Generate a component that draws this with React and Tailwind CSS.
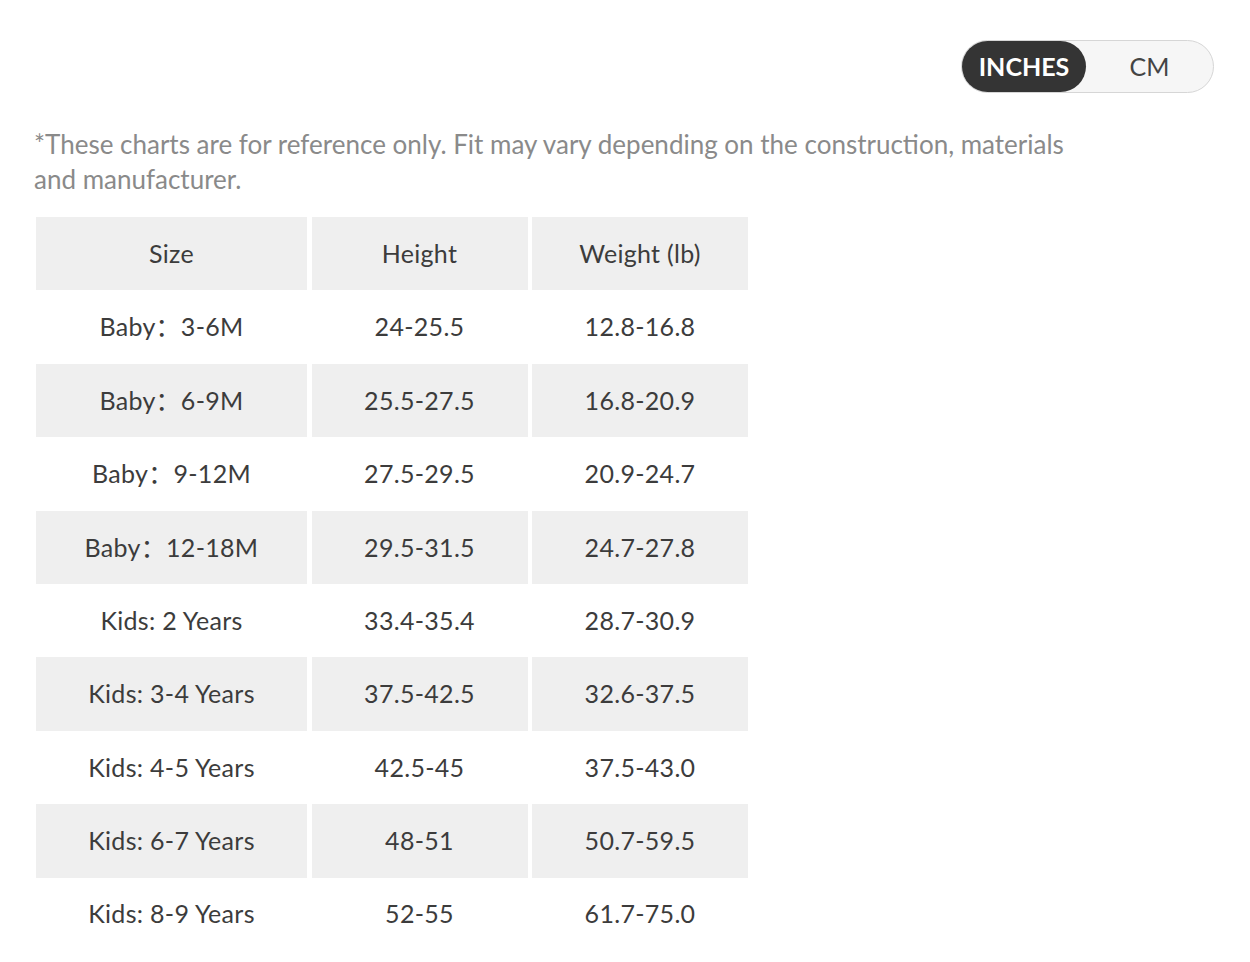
import React from "react";

const rows = [
  ["Baby：3-6M", "24-25.5", "12.8-16.8"],
  ["Baby：6-9M", "25.5-27.5", "16.8-20.9"],
  ["Baby：9-12M", "27.5-29.5", "20.9-24.7"],
  ["Baby：12-18M", "29.5-31.5", "24.7-27.8"],
  ["Kids: 2 Years", "33.4-35.4", "28.7-30.9"],
  ["Kids: 3-4 Years", "37.5-42.5", "32.6-37.5"],
  ["Kids: 4-5 Years", "42.5-45", "37.5-43.0"],
  ["Kids: 6-7 Years", "48-51", "50.7-59.5"],
  ["Kids: 8-9 Years", "52-55", "61.7-75.0"],
];

const Cell = ({ children, shaded }) => (
  <div
    className={`flex h-[73.4px] items-center justify-center text-[25px] tracking-[0.3px] text-[#3c3c3c] ${
      shaded ? "bg-[#efefef]" : "bg-white"
    }`}
  >
    {children}
  </div>
);

const App = () => {
  const [unit, setUnit] = React.useState("in");

  return (
    <div
      className="min-h-[962px] w-[1250px] bg-white pl-[34px] pr-[36px] pt-[40px]"
      style={{ fontFamily: "Lato, 'Noto Sans CJK SC', sans-serif" }}
    >
      <div className="flex justify-end">
        <div className="flex h-[53px] w-[253px] items-center rounded-full border border-[#d6d6d6] bg-[#f6f6f6]">
          <button
            onClick={() => setUnit("in")}
            className={`flex h-[51px] w-[124px] items-center justify-center rounded-full text-[25px] ${
              unit === "in" ? "bg-[#343434] font-bold text-white" : "text-[#444]"
            }`}
          >
            INCHES
          </button>
          <button
            onClick={() => setUnit("cm")}
            className={`flex h-[51px] flex-1 items-center justify-center rounded-full text-[25px] ${
              unit === "cm" ? "bg-[#343434] font-bold text-white" : "text-[#444]"
            }`}
          >
            CM
          </button>
        </div>
      </div>

      <p className="mt-[34px] max-w-[1060px] text-[26px] leading-[35px] text-[#8a8a8a]">
        *These charts are for reference only. Fit may vary depending on the
        construction, materials and manufacturer.
      </p>

      <div className="ml-[2px] mt-[20px] grid w-[712px] grid-cols-[271px_216px_216px] gap-x-[4.5px]">
        <Cell shaded>Size</Cell>
        <Cell shaded>Height</Cell>
        <Cell shaded>Weight (lb)</Cell>
        {rows.map((r, i) =>
          r.map((v, j) => (
            <Cell key={`${i}-${j}`} shaded={i % 2 === 1}>
              {v}
            </Cell>
          ))
        )}
      </div>
    </div>
  );
};

export default App;
